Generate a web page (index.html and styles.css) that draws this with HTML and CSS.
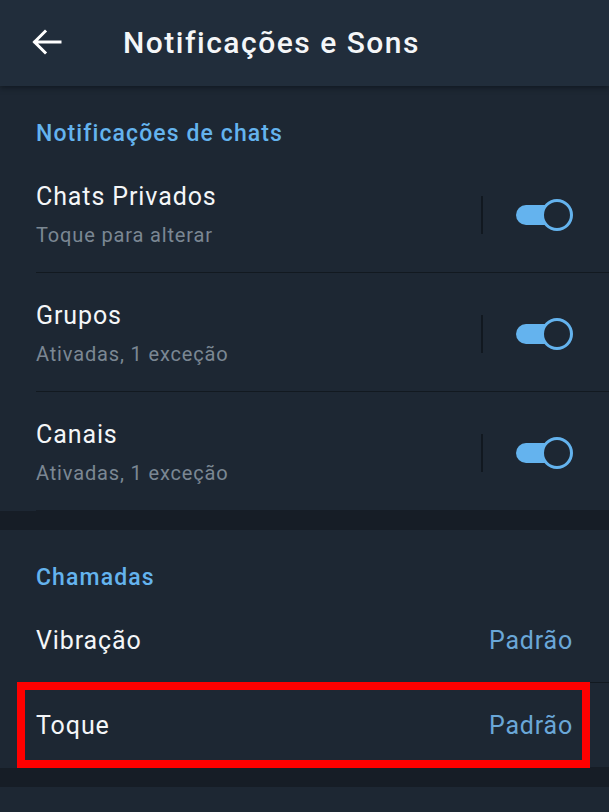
FILE: index.html
```html
<!DOCTYPE html>
<html lang="pt">

<head>
    <meta charset="UTF-8">
    <meta name="viewport" content="width=device-width, initial-scale=1.0">
    <title>Notificações e Sons</title>
    <link rel="stylesheet" href="styles.css">
</head>

<body>
    <header class="topbar">
        <svg class="back" width="30" height="26" viewBox="0 0 30 26">
            <path d="M28 13H3M13 2.5L2.5 13L13 23.5" fill="none" stroke="#ffffff" stroke-width="3" stroke-linecap="square" />
        </svg>
        <h1 class="topbar-title">Notificações e Sons</h1>
    </header>

    <section class="section">
        <h2 class="section-title">Notificações de chats</h2>
        <div class="row">
            <div class="row-text">
                <span class="row-title">Chats Privados</span>
                <span class="row-sub">Toque para alterar</span>
            </div>
            <span class="split"></span>
            <span class="switch"></span>
        </div>
        <div class="row">
            <div class="row-text">
                <span class="row-title">Grupos</span>
                <span class="row-sub">Ativadas, 1 exceção</span>
            </div>
            <span class="split"></span>
            <span class="switch"></span>
        </div>
        <div class="row">
            <div class="row-text">
                <span class="row-title">Canais</span>
                <span class="row-sub">Ativadas, 1 exceção</span>
            </div>
            <span class="split"></span>
            <span class="switch"></span>
        </div>
    </section>

    <div class="gap"></div>

    <section class="section">
        <h2 class="section-title">Chamadas</h2>
        <div class="row row-single">
            <span class="row-title">Vibração</span>
            <span class="row-value">Padrão</span>
        </div>
        <div class="row row-single marked">
            <span class="row-title">Toque</span>
            <span class="row-value">Padrão</span>
        </div>
    </section>

    <div class="gap"></div>

    <section class="section section-rest"></section>
</body>

</html>
```

FILE: styles.css
```css
body {
    margin: 0;
    background: #1d2733;
    font-family: Roboto, "Noto Sans", sans-serif;
    color: #f4f6f8;
    overflow: hidden;
}

.topbar {
    position: relative;
    z-index: 1;
    height: 86px;
    display: flex;
    align-items: center;
    background: #212d3b;
    box-shadow: 0 2px 5px rgba(10, 14, 20, 0.55);
}

.back {
    margin-left: 32px;
    margin-top: -2px;
}

.topbar-title {
    margin: -2px 0 0 61px;
    font-size: 30px;
    font-weight: 500;
    letter-spacing: 1.5px;
}

.section {
    background: #1d2733;
}

.section-title {
    margin: 0;
    padding: 36px 36px 8px;
    line-height: 24px;
    font-size: 23px;
    font-weight: 500;
    letter-spacing: 1.1px;
    color: #64b3ee;
}

.row {
    display: flex;
    align-items: center;
    padding: 28px 36px 24px;
    border-bottom: 1px solid #121920;
    position: relative;
}

.row::before {
    content: "";
    position: absolute;
    left: 0;
    bottom: -1px;
    width: 36px;
    height: 1px;
    background: #1d2733;
}

.row:last-child {
    border-bottom: none;
}

.row-text {
    flex: 1;
    display: flex;
    flex-direction: column;
}

.row-title {
    flex: 1;
    font-size: 25px;
    line-height: 30px;
    letter-spacing: 0.9px;
}

.row-sub {
    margin-top: 10px;
    font-size: 20px;
    line-height: 26px;
    letter-spacing: 0.85px;
    color: #7b8793;
}

.split {
    width: 2px;
    height: 38px;
    background: #111820;
    margin-right: 33px;
}

.switch {
    position: relative;
    width: 57px;
    height: 32px;
}

.switch::before {
    content: "";
    position: absolute;
    left: 0;
    top: 6px;
    width: 46px;
    height: 20px;
    border-radius: 10px;
    background: #64b3ee;
}

.switch::after {
    content: "";
    position: absolute;
    right: 0;
    top: 0;
    width: 26px;
    height: 26px;
    border: 3px solid #64b3ee;
    border-radius: 50%;
    background: #1d2733;
}

.row-single {
    padding: 28px 36px 26px;
}

.row-value {
    font-size: 25px;
    line-height: 30px;
    letter-spacing: 0.8px;
    color: #6aa7d8;
}

.marked::after {
    content: "";
    position: absolute;
    left: 17px;
    right: 19px;
    top: -1px;
    bottom: -1px;
    border: 8px solid #ff0000;
}

.gap {
    height: 20px;
    background: #161d26;
}

.section-rest {
    height: 60px;
}
```
